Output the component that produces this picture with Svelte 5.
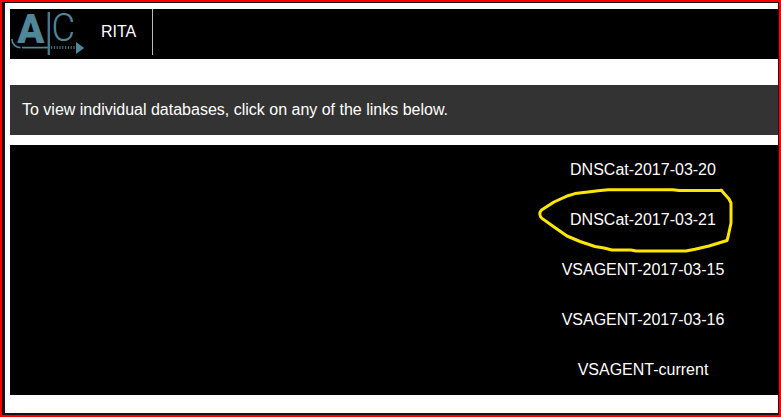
<script>
  const databases = [
    { name: 'DNSCat-2017-03-20' },
    { name: 'DNSCat-2017-03-21', marked: true },
    { name: 'VSAGENT-2017-03-15' },
    { name: 'VSAGENT-2017-03-16' },
    { name: 'VSAGENT-current' }
  ];
</script>

<div class="frame">
  <div class="page">
    <header>
      <svg class="logo" width="75" height="50" viewBox="0 0 75 50">
        <text class="bold" transform="translate(7.2 34.2) scale(.97 1)">A</text>
        <text class="thin" transform="translate(41.5 32.1) scale(.93 1)">C</text>
        <path d="M1.8 30C2.1 35 5.5 38.6 10.5 38.6" fill="none" stroke="#4f8799" stroke-width="1.6" />
        <path d="M12 38.6H38" stroke="#4f8799" stroke-width="1.7" />
        <path d="M41 38.6H66" stroke="#3f6c7b" stroke-width="3" stroke-dasharray="1.2 1.6" />
        <path d="M38.8 3V46" stroke="#477889" stroke-width="2.4" />
        <path d="M66 33L74.2 39L66 45Z" fill="#4f8799" />
      </svg>
      <a class="brand" href="#home">RITA</a>
    </header>
    <div class="notice">To view individual databases, click on any of the links below.</div>
    <ul>
      {#each databases as db}
        <li>
          <a href="#{db.name}">{db.name}</a>
          {#if db.marked}
            <svg class="marker" width="200" height="70" viewBox="537 185 200 70">
              <path d="M722 190.6H679L673 189.8H608L598 190.8L588 192L575 193.6L568 195.7L554 202L541.5 210C539.2 212.5 539.2 216.2 542 218.4L553 226.2L567 236L580 241.5L595 246.5L604 248L612 250H631L636 251H686L695 249.2L709 246L727 240.5L728 237L731 223V203L729 199L721 190" />
            </svg>
          {/if}
        </li>
      {/each}
    </ul>
  </div>
</div>

<style>
  :global(body) { overflow: hidden; }
  .frame {
    box-sizing: border-box;
    height: 417px;
    border: 2px solid #f00;
    padding: 1px 1px 2px 3px;
    background: #10141c;
    font: 16px/20px "Liberation Sans", Arial, sans-serif;
    color: #fff;
  }
  .page {
    box-sizing: border-box;
    height: 410px;
    padding: 6px 0 0 5px;
    background: #fff;
    overflow: hidden;
  }
  a { color: #fff; text-decoration: none; }
  header {
    display: flex;
    align-items: flex-start;
    height: 50px;
    background: #000;
  }
  .logo {
    flex: none;
    overflow: visible;
  }
  .logo text { fill: #4f8799; }
  .bold { font: 900 41px Roboto, sans-serif; }
  .thin { font: 300 39px Roboto, Lato, sans-serif; }
  .brand {
    box-sizing: border-box;
    height: 46px;
    padding: 13px 16px 0;
    border-right: 1px solid #bbb;
  }
  .notice {
    box-sizing: border-box;
    height: 50px;
    margin: 26px 0 10px;
    padding: 15px 12px;
    background: #333;
  }
  ul {
    width: 1266px;
    margin: 0;
    padding: 0;
    list-style: none;
    background: #000;
  }
  li {
    position: relative;
    height: 50px;
    line-height: 50px;
    text-align: center;
  }
  .marker {
    position: absolute;
    left: 527px;
    top: -10px;
    fill: none;
    stroke: #ffe600;
    stroke-width: 3;
    stroke-linecap: round;
    stroke-linejoin: round;
    pointer-events: none;
  }
</style>
